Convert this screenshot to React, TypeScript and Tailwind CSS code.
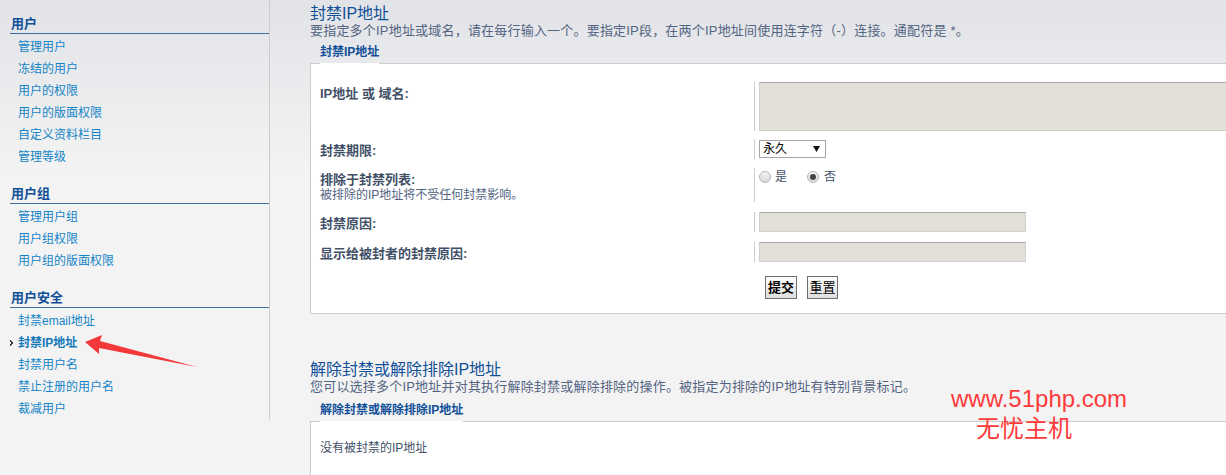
import React from "react";

const menu = [
  {
    title: "用户",
    items: ["管理用户", "冻结的用户", "用户的权限", "用户的版面权限", "自定义资料栏目", "管理等级"],
  },
  {
    title: "用户组",
    items: ["管理用户组", "用户组权限", "用户组的版面权限"],
  },
  {
    title: "用户安全",
    items: ["封禁email地址", "封禁IP地址", "封禁用户名", "禁止注册的用户名", "裁减用户"],
  },
];

const active = "封禁IP地址";

function Sidebar() {
  return (
    <aside className="w-[270px] shrink-0 self-start border-r border-[#cccccc] pt-[15px]">
      <div className="ml-[10px] flex flex-col gap-[17px]">
        {menu.map((g) => (
          <div key={g.title}>
            <h3 className="mb-[2px] border-b border-[#3b6fa0] pl-[1px] text-[13px] font-bold leading-[18px] text-[#115098]">
              {g.title}
            </h3>
            <ul>
              {g.items.map((it) => (
                <li
                  key={it}
                  className={
                    it === active
                      ? "relative pl-[8px] text-[12px] font-bold leading-[22px] text-[#1579b8]"
                      : "pl-[8px] text-[12px] leading-[22px] text-[#1384c6]"
                  }
                >
                  {it === active && (
                    <svg className="absolute left-0 top-[8px]" width="4" height="6" viewBox="0 0 4 6">
                      <path d="M0 0h1v1h1v1h1v2h-1v1h-1v1h-1v-2h1v-2h-1z" fill="#333" />
                    </svg>
                  )}
                  {it}
                </li>
              ))}
            </ul>
          </div>
        ))}
      </div>
    </aside>
  );
}

function Legend({ children }: { children: React.ReactNode }) {
  return (
    <div className="flex pl-[10px]">
      <span className="relative z-10 mb-[-1px] block border-b border-white pb-[3px] pt-[2px] text-[12px] font-bold leading-[16px] text-[#115098]">
        {children}
      </span>
    </div>
  );
}

function Row({
  label,
  sub,
  className,
  children,
}: {
  label: string;
  sub?: string;
  className?: string;
  children: React.ReactNode;
}) {
  return (
    <div className={"flex " + (className || "")}>
      <div className="w-[443px] shrink-0 pl-[9px] pt-[4px]">
        <p className="text-[13px] font-bold leading-[16px] text-[#425067]">{label}</p>
        {sub && <p className="text-[12px] leading-[14px] text-[#536482]">{sub}</p>}
      </div>
      <div className="flex border-l border-[#cccccc] pl-[4px]">{children}</div>
    </div>
  );
}

function Radio({ checked }: { checked?: boolean }) {
  return (
    <span className="mt-[3px] flex h-[12px] w-[12px] items-center justify-center rounded-full border border-[#b5b5b5] bg-[linear-gradient(to_bottom,#f4f4f4,#d9d9d9)]">
      {checked && <span className="h-[6px] w-[6px] rounded-full bg-[#444]" />}
    </span>
  );
}

function BanPanel() {
  return (
    <div className="relative w-[940px] border border-[#cccccc] bg-white pb-[14px] pt-[18px]">
      <Row label="IP地址 或 域名:">
        <div className="h-[49px] w-[600px] border border-[#d3cfc9] border-t-[#a8a8a8] bg-[#e2ded8]" />
      </Row>
      <Row label="封禁期限:" className="mt-[8px]">
        <div className="h-[20px] pt-[1px]">
          <div className="flex h-[18px] w-[67px] items-center justify-between border border-[#a6a6a6] bg-white pl-[3px] pr-[5px] text-[12px] leading-[16px] text-black">
            <span>永久</span>
            <svg width="7" height="6" viewBox="0 0 7 6">
              <path d="M0 0h7L3.5 6z" fill="#111" />
            </svg>
          </div>
        </div>
      </Row>
      <Row label="排除于封禁列表:" sub="被排除的IP地址将不受任何封禁影响。" className="mt-[9px]">
        <div className="flex h-[34px] items-start text-[12px] leading-[18px] text-[#425067]">
          <Radio />
          <span className="ml-[4px]">是</span>
          <span className="ml-[20px] flex items-start">
            <Radio checked />
            <span className="ml-[5px]">否</span>
          </span>
        </div>
      </Row>
      <Row label="封禁原因:" className="mt-[10px]">
        <div className="h-[20px] w-[267px] border border-[#d3cfc9] border-t-[#a8a8a8] bg-[#e2ded8]" />
      </Row>
      <Row label="显示给被封者的封禁原因:" className="mt-[10px]">
        <div className="h-[20px] w-[267px] border border-[#d3cfc9] border-t-[#a8a8a8] bg-[#e2ded8]" />
      </Row>
      <div className="mt-[14px] flex gap-[10px] pl-[454px]">
        <button className="h-[23px] w-[32px] border border-[#6e6e6e] bg-[linear-gradient(to_bottom,#ffffff,#dedede)] text-[13px] font-bold leading-[21px] text-black">
          提交
        </button>
        <button className="h-[23px] w-[31px] border border-[#6e6e6e] bg-[linear-gradient(to_bottom,#ffffff,#dedede)] text-[13px] leading-[21px] text-black">
          重置
        </button>
      </div>
    </div>
  );
}

export default function App() {
  return (
    <div className="relative flex h-[475px] w-[1226px] overflow-hidden bg-[#f3f3f3] bg-[linear-gradient(to_bottom,#e1e3e7_0px,#f3f3f3_170px)] font-[family-name:'Liberation_Sans','Noto_Sans_CJK_SC',sans-serif]">
      <Sidebar />
      <main className="min-w-0 flex-1 pl-[40px] pt-[4px]">
        <h1 className="text-[16px] leading-[20px] text-[#115098]">封禁IP地址</h1>
        <p className="whitespace-nowrap text-[13px] leading-[14px] tracking-[0.2px] text-[#536482]">
          要指定多个IP地址或域名，请在每行输入一个。要指定IP段，在两个IP地址间使用连字符（-）连接。通配符是 *。
        </p>
        <div className="mt-[4px]">
          <Legend>封禁IP地址</Legend>
        </div>
        <BanPanel />

        <h1 className="mt-[46px] text-[16px] leading-[20px] text-[#115098]">解除封禁或解除排除IP地址</h1>
        <p className="whitespace-nowrap text-[13px] leading-[14px] tracking-[0.2px] text-[#536482]">
          您可以选择多个IP地址并对其执行解除封禁或解除排除的操作。被指定为排除的IP地址有特别背景标记。
        </p>
        <div className="mt-[6px]">
          <Legend>解除封禁或解除排除IP地址</Legend>
        </div>
        <div className="h-[80px] w-[940px] border border-[#cccccc] bg-white pl-[9px] pt-[18px]">
          <p className="text-[12px] leading-[16px] text-[#425067]">没有被封禁的IP地址</p>
        </div>
      </main>

      {/* annotation arrow pointing at the active menu item */}
      <svg className="pointer-events-none absolute left-0 top-0" width="210" height="380" viewBox="0 0 210 380">
        <polygon points="85,342 102,335 100,341 197,367 99,348 99,354" fill="#f23838" />
      </svg>

      {/* watermark */}
      <div className="pointer-events-none absolute left-[951px] top-[384px] text-[24px] leading-[30px] text-[#fd3b3b]">
        <p>www.51php.com</p>
        <p className="pl-[25px]">无忧主机</p>
      </div>
    </div>
  );
}
